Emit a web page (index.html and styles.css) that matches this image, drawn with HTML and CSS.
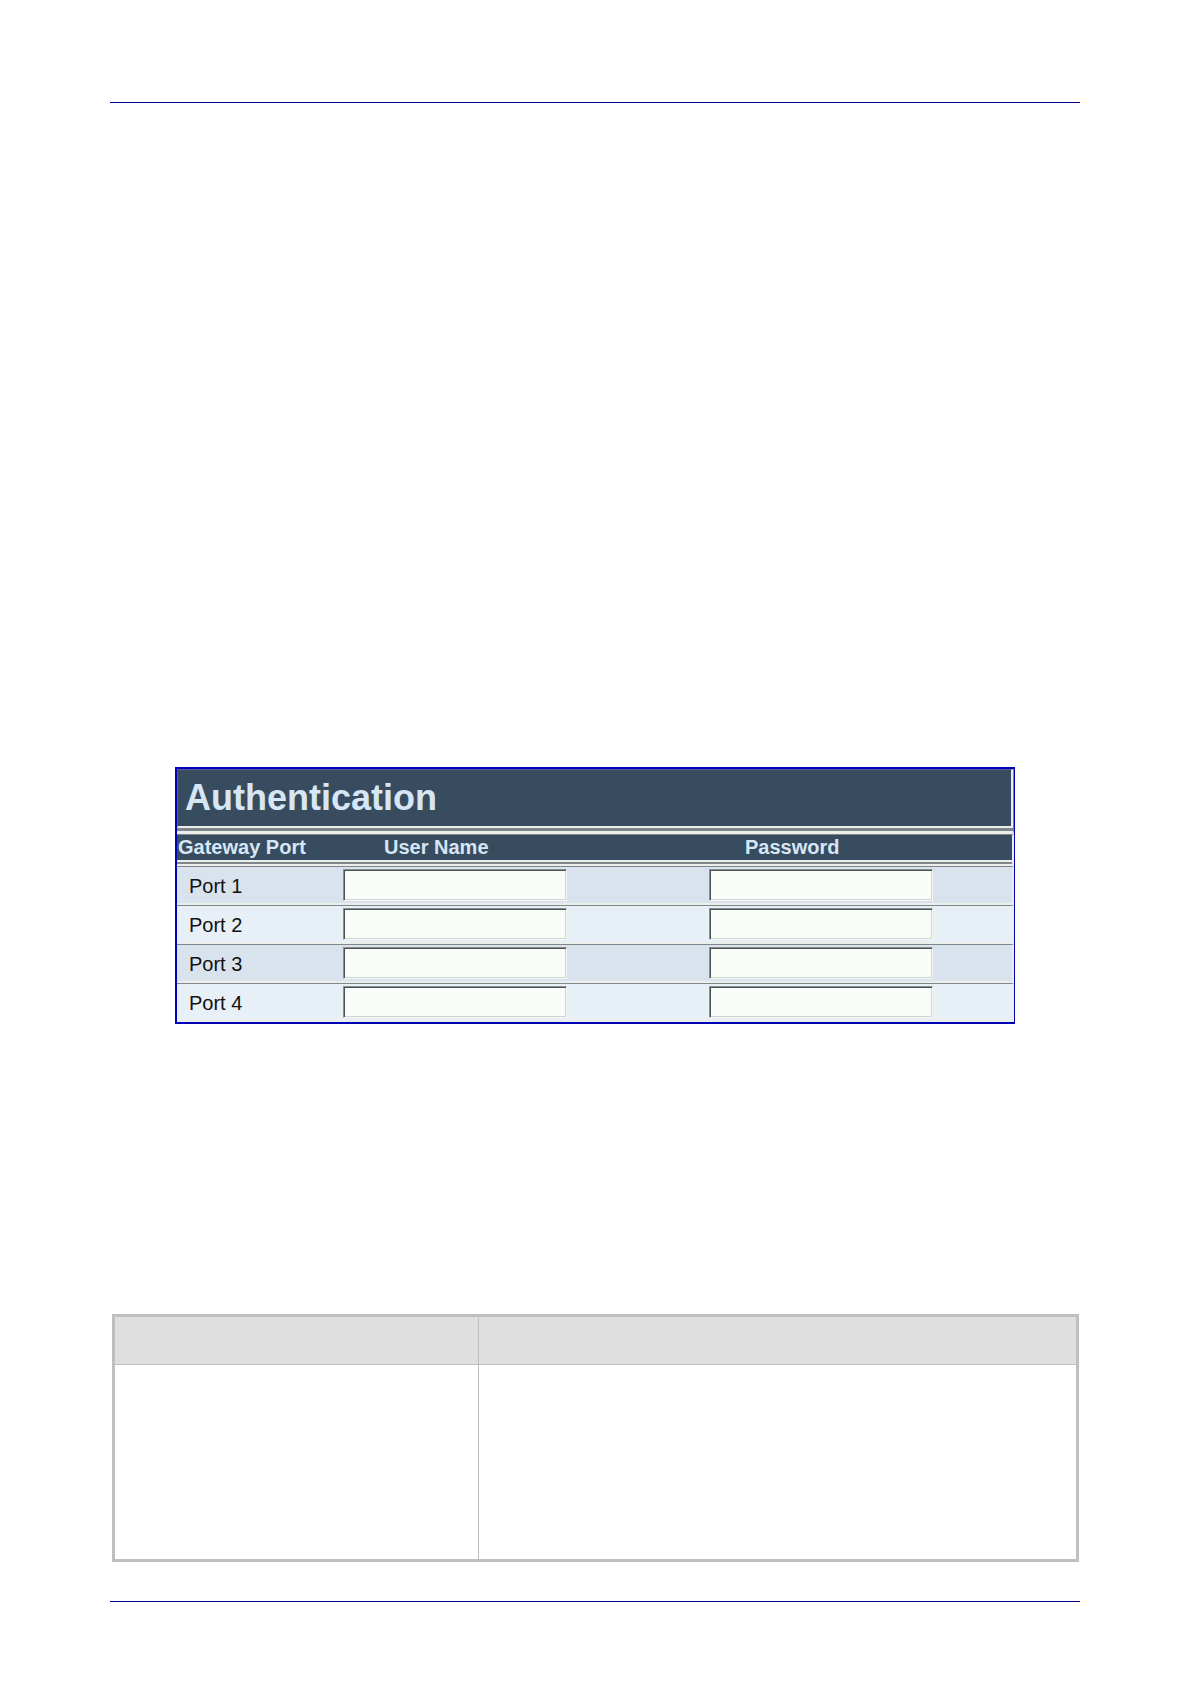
FILE: index.html
```html
<!DOCTYPE html>
<html lang="en">
<head>
    <meta charset="UTF-8">
    <meta name="viewport" content="width=device-width, initial-scale=1.0">
    <title>Authentication</title>
    <link rel="stylesheet" href="styles.css">
</head>
<body>
    <main class="page">
        <!-- Authentication form -->
        <form class="panel">
            <div class="panel-title">
                <h1>Authentication</h1>
            </div>
            <table class="ports">
                <thead>
                    <tr>
                        <th class="port-col" scope="col">Gateway Port</th>
                        <th class="user-col" scope="col">User Name</th>
                        <th class="pass-col" scope="col">Password</th>
                    </tr>
                </thead>
                <tbody>
                    <tr>
                        <td class="port-name"><label for="user1">Port 1</label></td>
                        <td><input type="text" class="field" id="user1"></td>
                        <td><input type="password" class="field" aria-label="Port 1 password"></td>
                    </tr>
                    <tr>
                        <td class="port-name"><label for="user2">Port 2</label></td>
                        <td><input type="text" class="field" id="user2"></td>
                        <td><input type="password" class="field" aria-label="Port 2 password"></td>
                    </tr>
                    <tr>
                        <td class="port-name"><label for="user3">Port 3</label></td>
                        <td><input type="text" class="field" id="user3"></td>
                        <td><input type="password" class="field" aria-label="Port 3 password"></td>
                    </tr>
                    <tr>
                        <td class="port-name"><label for="user4">Port 4</label></td>
                        <td><input type="text" class="field" id="user4"></td>
                        <td><input type="password" class="field" aria-label="Port 4 password"></td>
                    </tr>
                </tbody>
            </table>
        </form>

        <!-- Parameter table -->
        <table class="params">
            <thead>
                <tr>
                    <th class="param-name"></th>
                    <th></th>
                </tr>
            </thead>
            <tbody>
                <tr>
                    <td></td>
                    <td></td>
                </tr>
            </tbody>
        </table>
    </main>
</body>
</html>
```
FILE: styles.css
```css
* {
    box-sizing: border-box;
}

body {
    margin: 0;
    padding: 102px 110px 80px;
    background: #fff;
    font-family: "Liberation Sans", Arial, sans-serif;
}

/* Rules at the top and bottom of the page */
.page {
    padding: 664px 0 39px;
    border-top: 1px solid #00008b;
    border-bottom: 1px solid #00008b;
}

/* Authentication form */
.panel {
    margin: 0 65px 290px;
    border: 2px solid #0000b4;
    border-right-width: 1px;
    background: #eceeec;
}

.panel-title {
    padding-bottom: 3px;
    background: #7f878b;
    border-bottom: 3px solid #eceeec;
    border-right: 1px solid #7f878b;
}

.panel-title h1 {
    margin: 0;
    padding: 8px 7px;
    color: #d6e6f4;
    background: #384c5f;
    border: 1px solid #5555aa;
    border-right: 2px solid #eceeec;
    border-bottom: 2px solid #eceeec;
    font-size: 36px;
    line-height: 40px;
}

.ports {
    width: 100%;
    table-layout: fixed;
    border-collapse: separate;
    border-spacing: 0;
    font-size: 20px;
}

/* The header row ends in a light, grey and light strip */
.ports th {
    height: 32px;
    padding: 0 0 6px 1px;
    color: #d6e6f4;
    background: linear-gradient(to top, #eceeec 2px, #7f878b 2px 4px, #eceeec 4px 6px, #384c5f 6px);
    border-top: 1px solid #7f878b;
    line-height: 25px;
    text-align: left;
}

.ports .port-col {
    width: 166px;
}

.ports .user-col {
    width: 366px;
    padding-left: 41px;
}

.ports .pass-col {
    padding-left: 36px;
    border-right: 2px solid #eceeec;
}

.ports td {
    height: 39px;
    padding: 2px 0;
    border-top: 1px solid #7f878b;
    border-bottom: 2px solid #eceeec;
    vertical-align: top;
}

.ports td:last-child {
    border-right: 2px solid #eceeec;
}

.ports tbody tr {
    background: #e7eff7;
}

.ports tbody tr:nth-child(odd) {
    background: #d8e3ee;
}

.ports .port-name {
    padding: 2px 0 0 12px;
    color: #111;
    line-height: 34px;
}

.field {
    display: block;
    width: 224px;
    height: 32px;
    padding: 0 4px;
    background: #f8fdf9;
    border: 1px solid;
    border-color: #8b8f8f #f4f6f4 #f4f6f4 #8b8f8f;
    border-radius: 0;
    box-shadow: inset 1px 1px #4c5254, inset -1px -1px #d3d7d3;
    font: inherit;
}

/* Parameter table */
.params {
    width: calc(100% - 3px);
    margin-left: 2px;
    table-layout: fixed;
    border-collapse: collapse;
    border: 3px solid #bfbfbf;
}

.params th {
    height: 49px;
    padding: 0;
    background: #dfdfdf;
    border: 1px solid #bfbfbf;
}

.params .param-name {
    width: 365px;
}

.params td {
    height: 196px;
    border: 1px solid #bfbfbf;
}
```
